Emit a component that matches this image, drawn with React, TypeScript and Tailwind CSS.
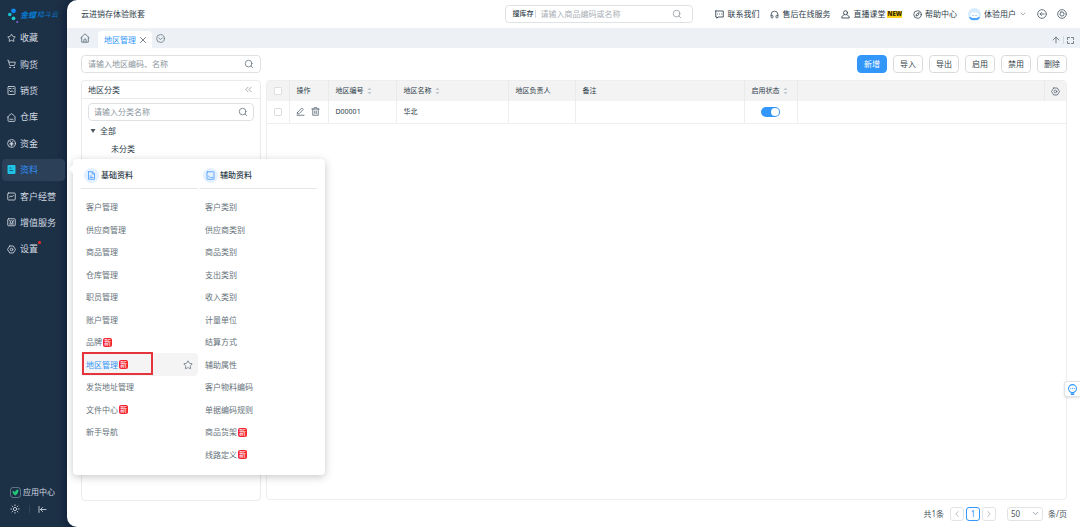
import React from 'react';
import {
    ArrowUp, ChevronDown, ChevronLeft, ChevronRight, ChevronsLeft, Compass,
    Headphones, Search, ShoppingCart, Star, Sun, X,
} from 'lucide-react';

const Svg: React.FC<{ className?: string, children: React.ReactNode }> = ({ className = 'size-[9px]', children }) => (
    <svg viewBox="0 0 18 18" fill="none" stroke="currentColor" strokeWidth="1.7" strokeLinecap="round" strokeLinejoin="round" className={`shrink-0 ${className}`} aria-hidden="true">
        {children}
    </svg>
);

const HouseIcon: React.FC<{ className?: string }> = ({ className }) => (
    <Svg className={className}>
        <path d="M2 8.2C2 7 2.4 6.4 3.2 5.7L9 1.2l5.8 4.500C15.600 6.400 16 7 16 8.200V15c0 1.200-.6 1.800-1.800 1.800H3.800C2.600 16.800 2 16.200 2 15V8.200Z" />
        <path d="M6 12.500h6" />
    </Svg>
);

const HomeTabIcon = () => (
    <Svg className="size-[10px] text-[#6b7c8a]">
        <path d="M1.500 8.500 9 1.500l7.500 7M3 7.500v9h12v-9" />
        <path d="M7 16.500v-4a2 2 0 0 1 4 0v4" />
    </Svg>
);

const NutIcon: React.FC<{ className?: string }> = ({ className }) => (
    <Svg className={className}>
        <path d="M5.500 2h7L17 9l-4.500 7h-7L1 9l4.500-7Z" />
        <circle cx="9" cy="9" r="2.600" />
    </Svg>
);

const SortIcon = () => (
    <svg viewBox="0 0 10 16" className="w-[5px] h-2 text-[#c3c8cc]" aria-hidden="true">
        <path d="M5 1 9 6H1L5 1ZM5 15l4-5H1l4 5Z" fill="currentColor" />
    </svg>
);

const Logo = () => (
    <a href="#" className="flex items-center h-6 mt-[3px] pl-[7px] text-[#087bd0] whitespace-nowrap">
        <svg viewBox="0 0 14 18" className="w-[13px] h-[17px] shrink-0" aria-hidden="true">
            <circle cx="7" cy="4" r="2.600" fill="#1089f5" />
            <circle cx="3" cy="8" r="1.900" fill="#16c5d8" />
            <circle cx="7" cy="12" r="2" fill="#20cdd0" />
            <circle cx="11" cy="16" r="1.100" fill="#8265e8" />
        </svg>
        <span className="text-[8px] font-bold italic">金蝶</span>
        <span className="text-[7px] italic ml-px">精斗云</span>
    </a>
);

const NAV = [
    { label: '收藏', icon: <Star className="size-[10px]" strokeWidth={2.2} /> },
    { label: '购货', icon: <ShoppingCart className="size-[10px]" strokeWidth={2.2} /> },
    { label: '销货', icon: <Svg><rect x="2" y="1" width="14" height="16" rx="1.500" /><path d="M5 5h3M5 9l3 3 2-3 3 3M12 5h1" /></Svg> },
    { label: '仓库', icon: <HouseIcon /> },
    { label: '资金', icon: <Svg><circle cx="9" cy="9" r="7.800" /><path d="m6 4.500 3 3.500 3-3.500M9 8v6M6 9h6M6 11.500h6" /></Svg> },
    { label: '资料', active: true },
    { label: '客户经营', icon: <Svg><rect x="1.500" y="2" width="15" height="14" rx="1.500" /><path d="m5 10 3-2 2 1.500 3-3" /></Svg> },
    { label: '增值服务', icon: <Svg><rect x="1.500" y="1.500" width="15" height="14" rx="1.500" /><circle cx="9" cy="8" r="2.800" /><path d="M5 5h.1M13 5h.1M5 12h8" /></Svg> },
    { label: '设置', icon: <NutIcon />, dot: true },
];

interface MenuEntry {
    label: string;
    isNew?: boolean;
    current?: boolean;
}

const BASIC: MenuEntry[] = [
    { label: '客户管理' },
    { label: '供应商管理' },
    { label: '商品管理' },
    { label: '仓库管理' },
    { label: '职员管理' },
    { label: '账户管理' },
    { label: '品牌', isNew: true },
    { label: '地区管理', isNew: true, current: true },
    { label: '发货地址管理' },
    { label: '文件中心', isNew: true },
    { label: '新手导航' },
];

const EXTRA: MenuEntry[] = [
    { label: '客户类别' },
    { label: '供应商类别' },
    { label: '商品类别' },
    { label: '支出类别' },
    { label: '收入类别' },
    { label: '计量单位' },
    { label: '结算方式' },
    { label: '辅助属性' },
    { label: '客户物料编码' },
    { label: '单据编码规则' },
    { label: '商品货架', isNew: true },
    { label: '线路定义', isNew: true },
];

const MenuColumn: React.FC<{ title: string, icon: React.ReactNode, items: MenuEntry[] }> = ({ title, icon, items }) => (
    <div className="flex-1">
        <div className="flex items-center gap-[2px] h-[22px] pl-[3px] pb-1 border-b border-[#e4e6e8] text-[#2d3c49] font-medium">
            <span className="size-[15px] rounded-full bg-[#e3f0ff] text-[#4c9bff] flex items-center justify-center">{icon}</span>
            {title}
        </div>
        <ul className="grid grid-rows-12 h-[270px] mt-[7px]">
            {items.map(item => (
                <li key={item.label} className={`relative flex items-center pl-[5px] rounded-r-sm ${item.current ? 'bg-[#f4f4f4]' : ''}`}>
                    <a href="#" className={item.current ? 'text-[#3296fa]' : 'text-[#66717a]'}>{item.label}</a>
                    {item.isNew && (
                        <span className="size-[9px] ml-px rounded-[2px] bg-[#f5222d] text-white text-[7px] leading-none flex items-center justify-center">新</span>
                    )}
                    {item.current && (
                        <>
                            <Star className="size-[10px] ml-auto mr-[5px] text-[#6d7a85]" strokeWidth={2} />
                            <span className="absolute -top-px left-px w-[71px] h-[23px] border-2 border-[#e6343c]" />
                        </>
                    )}
                </li>
            ))}
        </ul>
    </div>
);

const DataMenu = () => (
    <div className="absolute left-[71px] top-0 w-[252px] h-[316px] px-2 pt-2 bg-white rounded-sm shadow-[0_2px_8px_rgba(0,0,0,0.22)] text-[8px]">
        <span className="absolute -left-[3px] top-[7px] size-[6px] bg-white rotate-45" />
        <div className="flex gap-[2px]">
            <MenuColumn
                title="基础资料"
                icon={<Svg><path d="M3 1.500h8l4 4v11H3v-15ZM10.500 2v4H15M6 10h3M6 13h6" /></Svg>}
                items={BASIC}
            />
            <MenuColumn
                title="辅助资料"
                icon={<Svg><rect x="2" y="1.500" width="14" height="15" rx="1" /><path d="M5 10.500 7 12M10 13h3" /></Svg>}
                items={EXTRA}
            />
        </div>
    </div>
);

const Sidebar = () => (
    <aside className="relative z-20 w-[67px] shrink-0 flex flex-col text-[#d3dae1]">
        <Logo />
        <nav>
            <ul className="flex flex-col justify-between h-[233px] px-[2px] text-[9px]">
                {NAV.map(item => (
                    <li key={item.label} className={`relative h-[22px] rounded ${item.active ? 'bg-[#2c4058]' : ''}`}>
                        <a href="#" className={`flex items-center h-full pl-[5px] gap-1 whitespace-nowrap ${item.active ? 'text-[#2f8ff5]' : ''}`}>
                            {item.active ? (
                                <svg viewBox="0 0 18 18" className="size-[9px] shrink-0" aria-hidden="true">
                                    <rect x="1" y="0" width="16" height="18" rx="2" fill="#1fc3e6" />
                                    <path d="M5 6h4M5 11h7" stroke="#155c82" strokeWidth="2" />
                                </svg>
                            ) : (
                                <span className="w-[9px] flex justify-center">{item.icon}</span>
                            )}
                            <span className="relative">
                                {item.label}
                                {item.dot && <span className="absolute -right-[3px] -top-px size-[3px] rounded-full bg-[#ff2a2a]" />}
                            </span>
                        </a>
                        {item.active && <DataMenu />}
                    </li>
                ))}
            </ul>
        </nav>
        <div className="mt-auto pl-[10px] pb-[11px]">
            <a href="#" className="flex items-center gap-[2px] h-[14px] text-[8px] whitespace-nowrap">
                <svg viewBox="0 0 22 22" className="size-[11px]" aria-hidden="true">
                    <rect x="1" y="1" width="20" height="20" rx="5" fill="none" stroke="#75889a" strokeWidth="1.500" />
                    <path d="M5 8c3 0 4.500 1 5 3 .5-4 3-6 7-6 0 6-2 9-6 12-3-1-6-4-6-9Z" fill="#22c77a" />
                </svg>
                应用中心
            </a>
            <div className="flex items-center h-[14px] mt-[3px]">
                <button aria-label="主题"><Sun className="size-[10px]" /></button>
                <span className="w-px h-2 ml-[9px] bg-[#2d4359]" />
                <button aria-label="收起" className="ml-2">
                    <Svg><path d="M2 3v12M16 9H5M9 5 5 9l4 4" /></Svg>
                </button>
            </div>
        </div>
    </aside>
);

const Header = () => (
    <header className="flex items-center h-7 pl-[14px] pr-[13px] text-[8px] text-[#2d3c49] whitespace-nowrap">
        <span>云进销存体验账套</span>
        <div className="ml-auto flex items-center w-[188px] h-[18px] px-[6px] border border-[#dfe2e5] rounded">
            <label htmlFor="stock" className="text-[7px] font-medium pr-[2px] border-r border-[#d5d8db] leading-[8px]">搜库存</label>
            <input id="stock" placeholder="请输入商品编码或名称" className="flex-1 min-w-0 pl-1 outline-none placeholder:text-[#a9afb5]" />
            <Search className="size-[10px] mr-1 text-[#8c959d]" strokeWidth={1.800} />
        </div>
        <nav className="flex items-center ml-[22px]">
            <a href="#" className="flex items-center gap-[3px]">
                <Svg><path d="M1.500 2h15v12H6l-2.500 2.500V14h-2V2ZM5 8h.1M9 8h.1M13 8h.1" /></Svg>
                联系我们
            </a>
            <a href="#" className="flex items-center gap-[3px] ml-[11px]">
                <Headphones className="size-[9px]" />
                售后在线服务
            </a>
            <a href="#" className="flex items-center gap-[3px] ml-[11px]">
                <Svg><circle cx="9" cy="5.500" r="4" /><path d="M6.500 9.500C4 10.500 1.500 12 1.500 16h15c0-4-2.500-5.500-5-6.500" /></Svg>
                直播课堂
            </a>
            <span className="ml-[2px] h-[7px] bg-[#ffd51e] text-[#3b2c00] text-[6px] leading-[7px] font-black">NEW</span>
            <a href="#" className="flex items-center gap-[3px] ml-[11px]">
                <Compass className="size-[9px]" />
                帮助中心
            </a>
            <button className="flex items-center gap-[3px] ml-[11px]">
                <svg viewBox="0 0 26 26" className="size-[13px]" aria-hidden="true">
                    <circle cx="13" cy="13" r="13" fill="#d6ecff" />
                    <path d="M2 18h22c-1 3-3 5-5 6H7c-2-1-4-3-5-6Z" fill="#4aa5ff" />
                    <rect x="5" y="9" width="16" height="11" rx="5" fill="#fff" />
                    <path d="M10 15h.1M16 15h.1" stroke="#3296fa" strokeWidth="2" strokeLinecap="round" />
                </svg>
                体验用户
                <ChevronDown className="size-2 text-[#7c8791]" />
            </button>
            <button aria-label="返回" className="ml-[10px] text-[#5d6b77]">
                <Svg className="size-[10px]"><circle cx="9" cy="9" r="7.800" /><path d="M13 9H5.500M8 6.500 5.500 9 8 11.500" /></Svg>
            </button>
            <button aria-label="系统设置" className="ml-[10px] text-[#5d6b77]">
                <Svg className="size-[10px]"><circle cx="9" cy="9" r="7.800" /><path d="M7 5.500h4L13 9l-2 3.500H7L5 9l2-3.500Z" /></Svg>
            </button>
        </nav>
    </header>
);

const TabBar = () => (
    <div className="flex items-center h-5 pl-[13px] pr-[5px] bg-[#edf1f5] text-[8px]">
        <a href="#" aria-label="首页"><HomeTabIcon /></a>
        <div className="self-end flex items-center gap-[2px] h-[17px] ml-[8px] pl-[6px] pr-1 bg-white rounded-t">
            <a href="#" className="text-[#3296fa]">地区管理</a>
            <button aria-label="关闭"><X className="size-[10px] text-[#5d6b77]" /></button>
        </div>
        <button aria-label="更多标签" className="ml-1 text-[#6b7c8a]">
            <Svg><circle cx="9" cy="9" r="7.800" /><path d="m5.500 8 3.500 3 3.500-3" /></Svg>
        </button>
        <div className="ml-auto mt-1 flex items-center gap-[2px] text-[#5d6b77]">
            <button aria-label="置顶"><ArrowUp className="size-[10px]" /></button>
            <span className="w-px h-2 bg-[#d3d9de]" />
            <button aria-label="全屏">
                <Svg><path d="M3 7V3h4M11 3h4v4M15 11v4h-4M7 15H3v-4" /></Svg>
            </button>
        </div>
    </div>
);

const SearchBox: React.FC<{ label: string, className: string }> = ({ label, className }) => (
    <div className={`flex items-center border border-[#dfe2e5] rounded ${className}`}>
        <input aria-label={label} placeholder={label} className="flex-1 min-w-0 outline-none placeholder:text-[#8c959d]" />
        <Search className="size-[10px] text-[#5d6b77]" strokeWidth={1.800} />
    </div>
);

const ACTIONS = ['导入', '导出', '启用', '禁用', '删除'];

const Toolbar = () => (
    <div className="flex items-center justify-between">
        <SearchBox label="请输入地区编码、名称" className="w-[180px] h-[18px] px-[6px]" />
        <div className="flex gap-[6px]">
            <button className="w-[30px] h-[18px] rounded border border-[#3296fa] bg-[#3296fa] text-white">新增</button>
            {ACTIONS.map(name => (
                <button key={name} className="w-[30px] h-[18px] rounded border border-[#d9dcdf] text-[#333f49]">{name}</button>
            ))}
        </div>
    </div>
);

const CategoryPanel = () => (
    <section className="w-[180px] shrink-0 mb-[26px] border border-[#e9ebed] rounded">
        <div className="flex items-center justify-between h-[18px] px-[6px] border-b border-[#e9ebed]">
            <h2>地区分类</h2>
            <button aria-label="收起分类"><ChevronsLeft className="size-[11px] text-[#7c8791]" strokeWidth={1.500} /></button>
        </div>
        <SearchBox label="请输入分类名称" className="h-[18px] mx-[6px] mt-1 px-[5px]" />
        <ul className="mt-px">
            <li className="flex items-center h-[18px] pl-2 gap-1">
                <svg viewBox="0 0 10 8" className="w-[6px] h-1" aria-hidden="true"><path d="M0 0h10L5 8Z" fill="#4b5660" /></svg>
                全部
            </li>
            <li className="flex items-center h-[18px] pl-[29px]">未分类</li>
        </ul>
    </section>
);

const CHECKBOX = 'block mx-auto size-2 appearance-none rounded-[1px] border border-[#dcdfe2] bg-white checked:bg-[#3296fa]';

const AreaTable = () => (
    <table className="w-full table-fixed text-left text-[7px] [&_th]:font-normal [&_th]:border-r [&_td]:border-r [&_th]:border-[#e8eaec] [&_td]:border-[#eceeef] [&_th:last-child]:border-r-0 [&_td:last-child]:border-r-0">
        <colgroup>
            <col className="w-[22px]" />
            <col className="w-[39px]" />
            <col className="w-[68px]" />
            <col className="w-[112px]" />
            <col className="w-[67px]" />
            <col className="w-[169px]" />
            <col className="w-[53px]" />
            <col />
            <col className="w-[22px]" />
        </colgroup>
        <thead className="bg-[#f3f3f3]">
            <tr className="h-5">
                <th><input type="checkbox" aria-label="全选" className={CHECKBOX} /></th>
                <th className="pl-[7px]">操作</th>
                <th className="pl-[7px]"><span className="flex items-center gap-[3px]">地区编号<SortIcon /></span></th>
                <th className="pl-[7px]"><span className="flex items-center gap-[3px]">地区名称<SortIcon /></span></th>
                <th className="pl-[7px]">地区负责人</th>
                <th className="pl-[7px]">备注</th>
                <th className="pl-[7px]"><span className="flex items-center gap-[3px]">启用状态<SortIcon /></span></th>
                <th />
                <th><button aria-label="列设置" className="block mx-auto text-[#5d6b77]"><NutIcon /></button></th>
            </tr>
        </thead>
        <tbody>
            <tr className="h-[22px] border-b border-[#eceeef]">
                <td><input type="checkbox" aria-label="选择 D00001" className={CHECKBOX} /></td>
                <td>
                    <div className="flex pl-[6px] gap-[6px] text-[#5d6b77]">
                        <button aria-label="编辑"><Svg><path d="m3 11 8.500-9 3 3L6 13.500l-3.500.5.5-3ZM2 16.500h14" /></Svg></button>
                        <button aria-label="删除"><Svg><path d="M1.500 4h15M6 4V1.500h6V4M3.500 4v12.500h11V4M7.500 8v5M10.500 8v5" /></Svg></button>
                    </div>
                </td>
                <td className="pl-[7px]">D00001</td>
                <td className="pl-[7px]">华北</td>
                <td />
                <td />
                <td>
                    <input
                        type="checkbox"
                        role="switch"
                        aria-label="启用状态"
                        defaultChecked
                        className="relative block mx-auto w-[19px] h-[10px] appearance-none rounded-full bg-[#c4c8cc] checked:bg-[#3296fa] after:absolute after:top-px after:left-px checked:after:left-[10px] after:size-2 after:rounded-full after:bg-white"
                    />
                </td>
                <td colSpan={2} />
            </tr>
        </tbody>
    </table>
);

const Pager = () => (
    <div className="flex items-center justify-end h-[27px] text-[8px] text-[#4b5660]">
        <span>共1条</span>
        <div className="flex gap-[2px] ml-[6px]">
            <button aria-label="上一页" className="size-[14px] flex items-center justify-center border border-[#e1e4e6] rounded-[3px] text-[#a9afb5]"><ChevronLeft className="size-[10px]" /></button>
            <button className="size-[14px] flex items-center justify-center border border-[#3296fa] rounded-[3px] text-[#3296fa]">1</button>
            <button aria-label="下一页" className="size-[14px] flex items-center justify-center border border-[#e1e4e6] rounded-[3px] text-[#a9afb5]"><ChevronRight className="size-[10px]" /></button>
        </div>
        <div className="relative ml-[11px]">
            <select id="size" defaultValue="50" className="block w-9 h-[14px] pl-[3px] appearance-none border border-[#e1e4e6] rounded-[3px]">
                <option>20</option>
                <option>50</option>
                <option>100</option>
            </select>
            <ChevronDown className="absolute right-[3px] top-[2px] size-[9px] text-[#7c8791] pointer-events-none" />
        </div>
        <label htmlFor="size" className="ml-[5px]">条/页</label>
    </div>
);

export default function App() {
    return (
        <div className="flex min-h-screen bg-[#1c3046] font-['Noto_Sans','Noto_Sans_CJK_SC',sans-serif]">
            <Sidebar />
            <main className="relative flex-1 min-w-0 flex flex-col bg-white rounded-l-[10px] overflow-hidden shadow-[-2px_0_8px_rgba(8,18,50,0.6)]">
                <Header />
                <TabBar />
                <div className="flex-1 flex flex-col pl-[14px] pr-[13px] pt-[7px] text-[8px] text-[#2d3c49]">
                    <Toolbar />
                    <div className="flex-1 flex gap-[5px] mt-[7px]">
                        <CategoryPanel />
                        <section className="flex-1 min-w-0 flex flex-col">
                            <div className="flex-1 border border-[#eceeef] rounded overflow-hidden">
                                <AreaTable />
                            </div>
                            <Pager />
                        </section>
                    </div>
                </div>
                <button aria-label="智能助手" className="absolute right-0 top-[381px] w-4 h-4 flex items-center justify-center bg-white border border-r-0 border-[#e1e4e6] rounded-l-[3px] shadow text-[#3296fa]">
                    <Svg className="size-[11px]"><circle cx="9" cy="7.500" r="6.500" /><path d="M6 7.500h.1M9 7.500h.1M12 7.500h.1M6.500 14.500h5M7 17h4" /></Svg>
                </button>
            </main>
        </div>
    );
}
